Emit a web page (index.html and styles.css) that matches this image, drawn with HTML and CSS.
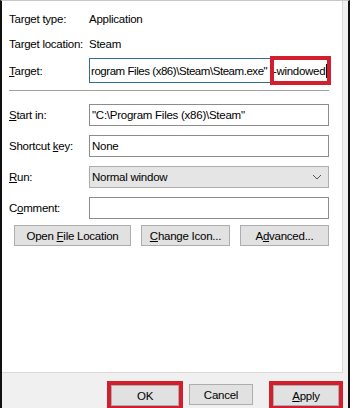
FILE: index.html
```html
<!DOCTYPE html>
<html>

<head>
    <title>Steam Properties</title>
    <link rel="stylesheet" href="styles.css">
</head>

<body>
    <div class="window">
        <div class="page">
            <div class="row info">
                <span class="label">Target type:</span>
                <span>Application</span>
            </div>
            <div class="row info">
                <span class="label">Target location:</span>
                <span>Steam</span>
            </div>
            <div class="row target">
                <span class="label"><u>T</u>arget:</span>
                <div class="field focused">
                    <span class="field-text">rogram Files (x86)\Steam\Steam.exe"&nbsp;</span><span class="arg">-windowed</span>
                    <span class="caret"></span>
                </div>
                <div class="mark mark-target"></div>
            </div>

            <div class="separator"></div>

            <div class="row edit first-edit">
                <span class="label"><u>S</u>tart in:</span>
                <div class="field"><span class="field-text">"C:\Program Files (x86)\Steam"</span></div>
            </div>
            <div class="row edit">
                <span class="label">Shortcut <u>k</u>ey:</span>
                <div class="field"><span class="field-text">None</span></div>
            </div>
            <div class="row edit">
                <span class="label"><u>R</u>un:</span>
                <div class="field select">
                    <span class="field-text">Normal window</span>
                    <svg class="chevron" width="10" height="6" viewBox="0 0 10 6">
                        <polyline points="1,1 5,5 9,1" fill="none" stroke="#555" stroke-width="1" />
                    </svg>
                </div>
            </div>
            <div class="row edit">
                <span class="label">C<u>o</u>mment:</span>
                <div class="field"></div>
            </div>

            <div class="actions">
                <button class="btn btn-open">Open <u>F</u>ile Location</button>
                <button class="btn btn-icon"><u>C</u>hange Icon...</button>
                <button class="btn btn-adv">A<u>d</u>vanced...</button>
            </div>
        </div>

        <div class="footer">
            <div class="highlight ok-wrap">
                <button class="btn btn-footer">OK</button>
            </div>
            <button class="btn btn-footer btn-cancel">Cancel</button>
            <div class="highlight apply-wrap">
                <button class="btn btn-footer"><u>A</u>pply</button>
            </div>
        </div>
    </div>
</body>

</html>
```

FILE: styles.css
```css
body {
    margin: 0;
    padding: 0;
    width: 356px;
    height: 408px;
    overflow: hidden;
    background-color: #fff;
    font-family: "Liberation Sans", Arial, sans-serif;
    font-size: 11.5px;
    letter-spacing: -0.25px;
    color: #000;
}

u {
    text-decoration: underline;
    text-underline-offset: 1px;
}

.window {
    width: 346px;
    height: 420px;
    background-color: #f0f0f0;
    border-left: 2px solid #111;
    border-right: 2px solid #111;
    border-top: 1px solid #c8c8c8;
}

.page {
    width: 333px;
    height: 364px;
    padding-top: 7px;
    padding-left: 7px;
    margin-right: 5px;
    background-color: #fff;
    border-right: 1px solid #d9d9d9;
    border-bottom: 1px solid #d9d9d9;
}

.row {
    display: flex;
    align-items: center;
    height: 22px;
}

.label {
    width: 80px;
    flex: none;
}

.info + .info {
    margin-top: 3px;
}

.target {
    position: relative;
    height: 25px;
    margin-top: 3px;
}

.field {
    box-sizing: border-box;
    width: 240px;
    height: 22px;
    border: 1px solid #8c8c8c;
    background-color: #fff;
    display: flex;
    align-items: center;
    padding-left: 2px;
    overflow: hidden;
    white-space: nowrap;
}

.target .field {
    height: 25px;
    padding-left: 1px;
    letter-spacing: -0.45px;
}

.arg {
    margin-left: 3px;
    letter-spacing: -0.3px;
}

.field.focused {
    border-color: #2d6f93;
}

.caret {
    display: inline-block;
    flex: none;
    width: 1px;
    height: 14px;
    background-color: #000;
    margin-left: 1px;
}

.mark {
    position: absolute;
    border: 4px solid #d31f2d;
    pointer-events: none;
}

.mark-target {
    left: 261px;
    top: -2px;
    width: 53px;
    height: 21px;
}

.separator {
    width: 320px;
    height: 1px;
    margin-top: 7px;
    background-color: #a0a0a0;
}

.edit {
    margin-top: 9px;
}

.edit.first-edit {
    margin-top: 13px;
}

.select {
    background-color: #e5e5e5;
    border-color: #adadad;
    justify-content: space-between;
    padding-right: 6px;
}

.chevron {
    flex: none;
}

.actions {
    display: flex;
    gap: 10px;
    margin-top: 6px;
    padding-left: 5px;
}

.btn {
    box-sizing: border-box;
    height: 21px;
    background-color: #e1e1e1;
    border: 1px solid #adadad;
    border-radius: 0;
    font-family: "Liberation Sans", Arial, sans-serif;
    font-size: 11.5px;
    letter-spacing: -0.25px;
    color: #000;
    padding: 0;
}

.btn-open {
    width: 117px;
}

.btn-icon {
    width: 89px;
}

.btn-adv {
    width: 89px;
}

.footer {
    display: flex;
    align-items: flex-start;
    padding-top: 8px;
    padding-left: 105px;
}

.highlight {
    border: 4px solid #d31f2d;
    display: flex;
}

.btn-footer {
    width: 68px;
}

.apply-wrap .btn-footer {
    width: 66px;
}

.btn-cancel {
    width: 64px;
    margin-top: 3px;
    margin-left: 6px;
    margin-right: 16px;
}
```
